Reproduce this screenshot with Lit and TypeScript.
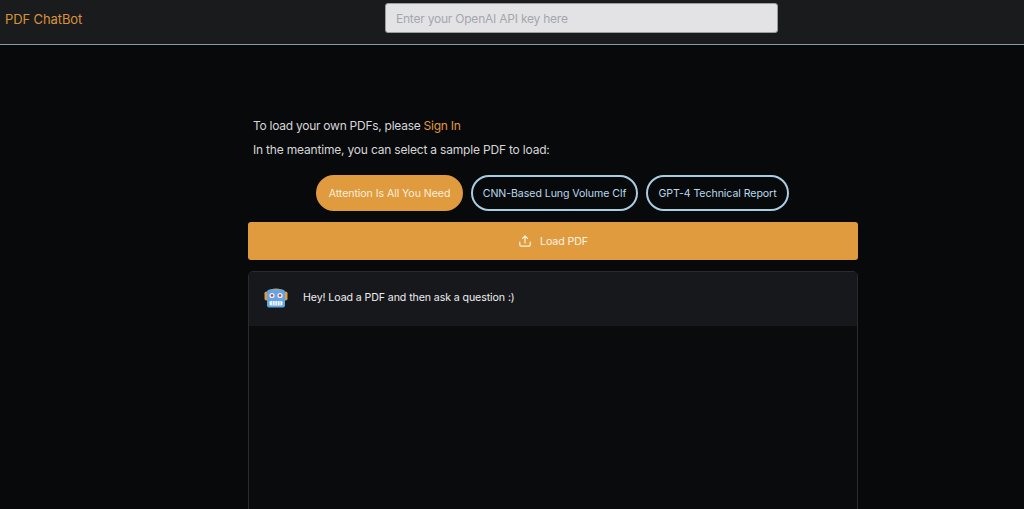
import { LitElement, html, css } from "lit";
import { customElement } from "lit/decorators.js";

@customElement("app-root")
export class AppRoot extends LitElement {
  static styles = css`
    :host { display: block; height: 509px; overflow: hidden; background: #08090b; font-family: Inter, "Liberation Sans", sans-serif; color: #e2e2e4; }
    .nav { height: 44px; box-sizing: content-box; background: #1a1b1d; border-bottom: 1px solid #7f9dac; display: flex; align-items: flex-start; }
    .brand { width: 385px; padding: 11px 0 0 5px; box-sizing: border-box; font-size: 13px; letter-spacing: -0.1px; line-height: 16px; color: #d9923a; }
    .key { width: 392.500px; height: 30px; margin-top: 3px; box-sizing: border-box; background: #e3e3e5; border: 1px solid #9b9ca0; border-radius: 3px; padding: 1px 10px 0; font: 12px Inter, sans-serif; letter-spacing: -0.22px; color: #a3a6af; display: flex; align-items: center; }
    .main { width: 610px; margin-left: 248px; padding-top: 73px; }
    .line { margin: 0 0 0 5px; font-size: 12px; letter-spacing: -0.19px; line-height: 16px; height: 24px; color: #d6d6d8; }
    .line.first { letter-spacing: -0.26px; }
    .line a { color: #e09a3f; }
    .pills { display: flex; gap: 8px; padding-left: 68px; margin-top: 9px; }
    .pill { height: 36px; box-sizing: border-box; border-radius: 18px; border: 2px solid #a9cde3; color: #b9d9ec; font-size: 10.600px; letter-spacing: -0.07px; display: flex; align-items: center; justify-content: center; }
    .pill.on { background: #e09b3f; border-color: #e09b3f; color: #fbeedd; }
    .load { height: 38px; margin-top: 11px; background: #e09b3f; border-radius: 3px; display: flex; align-items: center; justify-content: center; gap: 9px; color: #fdf3e5; font-size: 10.600px; letter-spacing: -0.07px; padding-left: 1px; box-sizing: border-box; }
    .chat { margin-top: 11px; height: 300px; box-sizing: border-box; border: 1px solid #2a2b2e; border-radius: 5px; background: #0a0b0d; }
    .msg { height: 54px; box-sizing: border-box; padding: 0 0 2px 15px; background: #16181b; border-radius: 5px 5px 0 0; display: flex; align-items: center; gap: 15px; font-size: 10.600px; letter-spacing: -0.09px; color: #eeeef0; }
    .msg span { margin-bottom: 2px; }
    svg { display: block; }
  `;
  render() {
    return html`
      <div class="nav">
        <div class="brand">PDF ChatBot</div>
        <div class="key">Enter your OpenAI API key here</div>
      </div>
      <div class="main">
        <p class="line first">To load your own PDFs, please <a>Sign In</a></p>
        <p class="line">In the meantime, you can select a sample PDF to load:</p>
        <div class="pills">
          <div class="pill on" style="width:147px">Attention Is All You Need</div>
          <div class="pill" style="width:167px">CNN-Based Lung Volume Clf</div>
          <div class="pill" style="width:143px">GPT-4 Technical Report</div>
        </div>
        <div class="load">
          <svg width="12" height="12" viewBox="0 0 12 12" fill="none" stroke="#fdf3e5" stroke-width="1.200" stroke-linecap="round" stroke-linejoin="round"><path d="M.8 7v2.800a1.300 1.300 0 0 0 1.300 1.300h7.800a1.300 1.300 0 0 0 1.300-1.300V7M6 8V1M3.500 3.400 6 1l2.500 2.400"/></svg>
          <span>Load PDF</span>
        </div>
        <div class="chat">
          <div class="msg">
            <svg width="24" height="24" viewBox="0 0 24 24">
              <rect x="0.5" y="5.500" width="4" height="9" rx="1.800" fill="#e09b3f"/>
              <rect x="19.500" y="5.500" width="4" height="9" rx="1.800" fill="#e09b3f"/>
              <path d="M4.500 5C6 1.500 18 1.500 19.500 5z" fill="#d9a04f"/>
              <path d="M6 3.500h12a3 3 0 0 1 3 3v13a2 2 0 0 1-2 2H5a2 2 0 0 1-2-2v-13a3 3 0 0 1 3-3z" fill="#5ea6e6"/>
              <circle cx="8" cy="9.500" r="2.600" fill="#f0f0f0"/><circle cx="8" cy="9.500" r="1.300" fill="#dc3348"/>
              <circle cx="16" cy="9.500" r="2.600" fill="#f0f0f0"/><circle cx="16" cy="9.500" r="1.300" fill="#dc3348"/>
              <rect x="5.500" y="15" width="13" height="4.500" rx="1.200" fill="#eef2f5"/>
              <path d="M8.500 15v4.500M11 15v4.500M13.500 15v4.500M16 15v4.500" stroke="#8aa8c0" stroke-width=".6"/>
            </svg>
            <span>Hey! Load a PDF and then ask a question :)</span>
          </div>
        </div>
      </div>
    `;
  }
}
